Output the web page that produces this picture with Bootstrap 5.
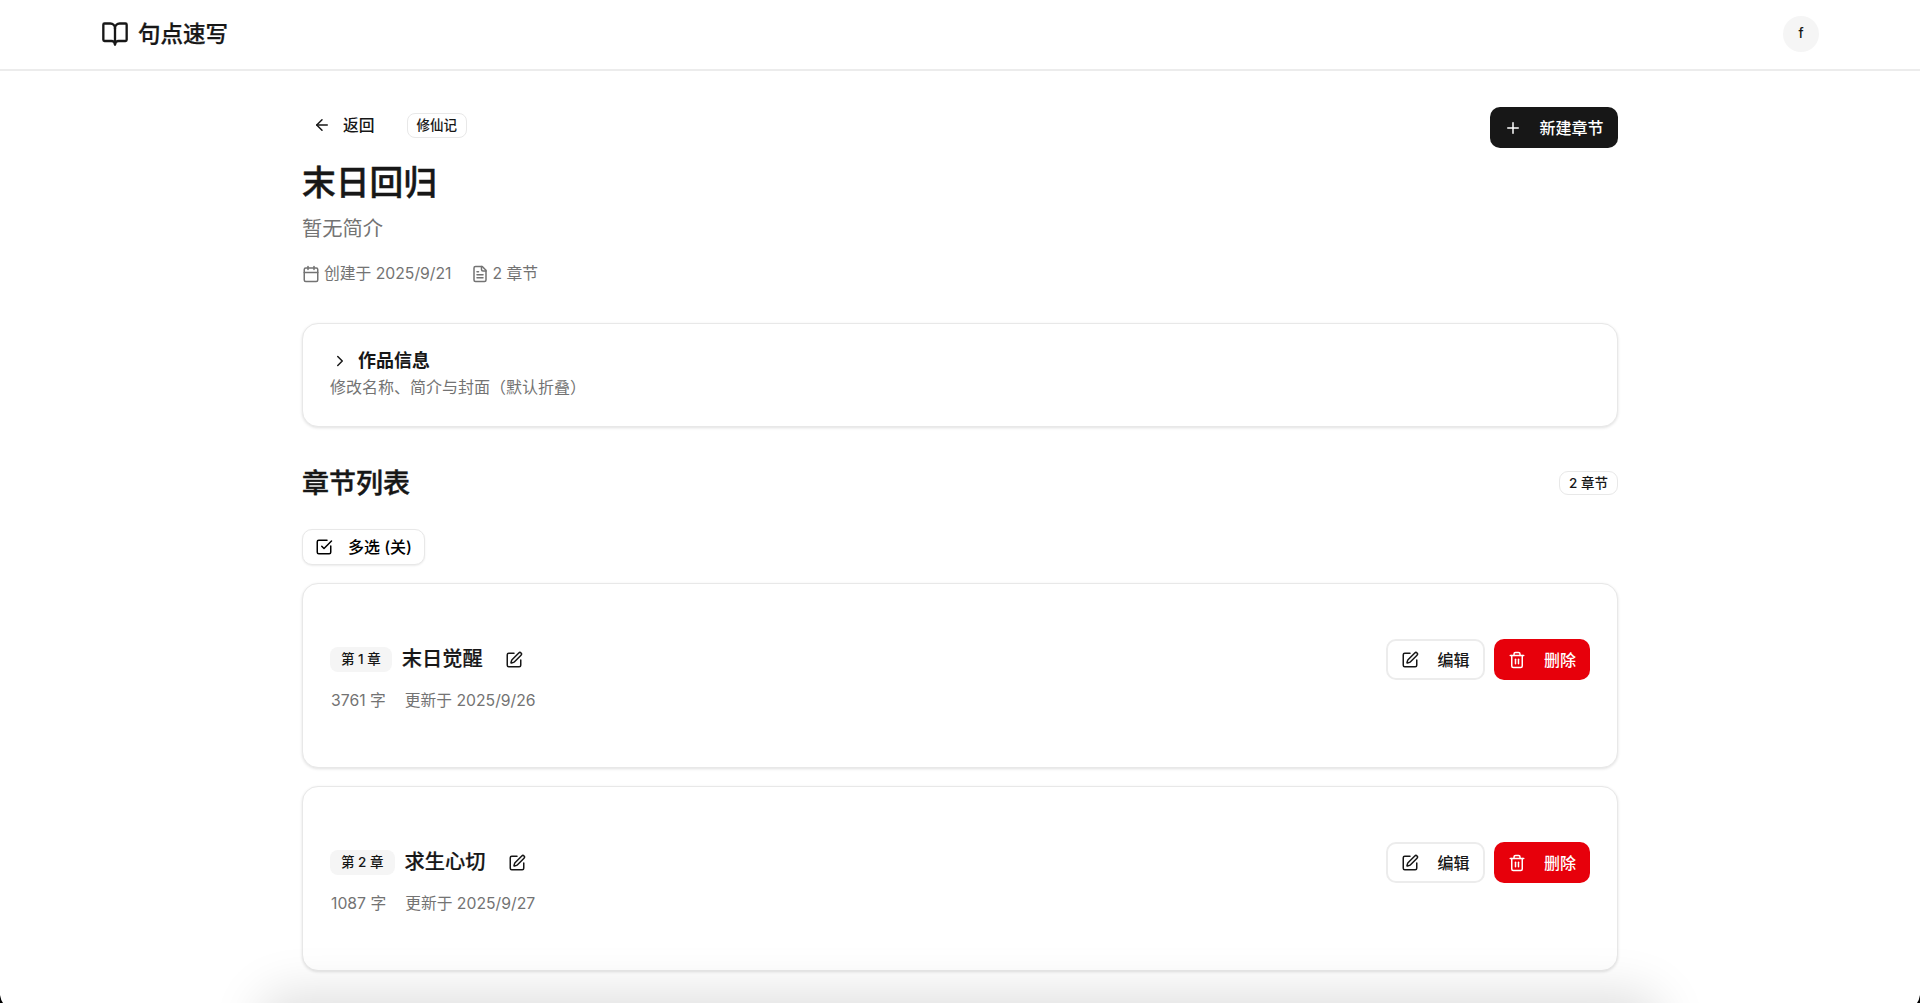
<!doctype html>
<html lang="zh"><head><meta charset="utf-8">
<link href="https://cdn.jsdelivr.net/npm/bootstrap@5.3.0/dist/css/bootstrap.min.css" rel="stylesheet">
<style>
html,body{height:100%;overflow:hidden}
body{font-family:Inter,"Noto Sans CJK SC",sans-serif;color:#171717;background:#fff}
.topbar{height:71px;border-bottom:2px solid #ececec;padding:0 101px 2px}
.brand{font-size:22.5px;font-weight:500;gap:9px;color:#171717;-webkit-text-stroke:.25px #171717}
.avatar{width:36px;height:36px;border-radius:50%;background:#f5f5f5;font-size:13.5px;font-weight:500}
.page{width:1316px;margin:0 auto;padding-top:36px}
.back{font-size:15.75px;font-weight:500;gap:12px;padding:0 12px 0 11px}
.back span{position:relative;top:1px}
.tag{border:1px solid #e8e8e8;border-radius:8px;font-size:13.5px;font-weight:500;padding:0 9px;height:25px;line-height:23px}
.head-l{gap:20px}
.new-btn{background:#171717;color:#fff;width:128px;height:41px;border-radius:10px;font-size:16px;font-weight:500;gap:17px;border:0;padding:0}
.ttl{font-size:33.75px;font-weight:500;line-height:44px;margin:13px 0 0;-webkit-text-stroke:.45px #171717}
.sub{font-size:20.25px;color:#737373;line-height:28px;margin-top:10px}
.meta{font-size:15.75px;color:#737373;gap:19px;margin-top:21px;line-height:20px}
.meta>span{gap:4px}
.pane{border:1px solid #e8e8e8;border-radius:16px;box-shadow:0 1px 3px rgba(0,0,0,.12);background:#fff}
.info{height:104px;margin-top:39px;padding:25px 27px}
.info-t{font-size:18px;font-weight:600;line-height:24px;gap:9px;padding-left:1px}
.info-s{font-size:16px;color:#737373;line-height:22px;margin-top:3px}
.sec{margin-top:42px;height:30px}
.sec h2{font-size:27px;font-weight:500;margin:0;-webkit-text-stroke:.4px #171717}
.sec .tag{height:24px;line-height:22px;border-radius:9px;margin-bottom:2px}
.multi{width:123px;height:36px;margin-top:30px;border:1px solid #e8e8e8;border-radius:10px;box-shadow:0 1px 2px rgba(0,0,0,.08);font-size:16px;font-weight:500;gap:15px;padding:0;background:#fff}
.chap{height:185px;padding:55px 27px 0;margin-top:18px}
.num{background:#f5f5f5;border-radius:8px;font-size:13.5px;font-weight:500;height:25px;padding:0 11px}
.chap-t{font-size:20.25px;font-weight:500;margin-left:10px;-webkit-text-stroke:.2px #171717}
.pen{margin-left:22px}
.chap-m{font-size:15.75px;color:#737373;gap:19px;margin-top:10px;padding-left:1px;line-height:22px}
.act{gap:9px}
.edit,.del{height:41px;width:96px;border-radius:10px;font-size:16px;font-weight:500;gap:18px;padding:0}
.edit{border:2px solid #ececec;background:#fff;color:#171717;width:99px}
.del{background:#e7000b;color:#fff;border:0}
.row-h{height:41px}
.ico{fill:none;stroke:currentColor;stroke-width:2;stroke-linecap:round;stroke-linejoin:round;flex:none}
.dock{position:fixed;left:270px;right:270px;bottom:-60px;height:60px;box-shadow:0 0 50px 10px rgba(0,0,0,.13);border-radius:16px}
.nick{position:fixed;bottom:0;width:3px;height:8px}
.nick-l{left:0}
.nick-r{right:0}
</style></head><body>
<header class="topbar d-flex align-items-center justify-content-between">
 <div class="brand d-flex align-items-center">
  <svg class="ico" width="28" height="28" viewBox="0 0 24 24"><path d="M12 7v14"/><path d="M3 18a1 1 0 0 1-1-1V4a1 1 0 0 1 1-1h5a4 4 0 0 1 4 4 4 4 0 0 1 4-4h5a1 1 0 0 1 1 1v13a1 1 0 0 1-1 1h-6a3 3 0 0 0-3 3 3 3 0 0 0-3-3z"/></svg>
  <span>句点速写</span></div>
 <div class="avatar d-flex align-items-center justify-content-center">f</div>
</header>
<main class="page">
 <div class="d-flex justify-content-between align-items-start">
  <div class="head-l d-flex align-items-center" style="height:36px">
   <div class="back d-flex align-items-center"><svg class="ico" width="18" height="18" viewBox="0 0 24 24"><path d="m12 19-7-7 7-7"/><path d="M19 12H5"/></svg><span>返回</span></div>
   <span class="tag">修仙记</span>
  </div>
  <button class="new-btn d-flex align-items-center justify-content-center"><svg class="ico" width="18" height="18" viewBox="0 0 24 24"><path d="M5 12h14"/><path d="M12 5v14"/></svg><span>新建章节</span></button>
 </div>
 <h1 class="ttl">末日回归</h1>
 <div class="sub">暂无简介</div>
 <div class="meta d-flex">
  <span class="d-flex align-items-center"><svg class="ico" width="18" height="18" viewBox="0 0 24 24"><path d="M8 2v4"/><path d="M16 2v4"/><rect width="18" height="18" x="3" y="4" rx="2"/><path d="M3 10h18"/></svg>创建于 2025/9/21</span>
  <span class="d-flex align-items-center"><svg class="ico" width="18" height="18" viewBox="0 0 24 24"><path d="M15 2H6a2 2 0 0 0-2 2v16a2 2 0 0 0 2 2h12a2 2 0 0 0 2-2V7Z"/><path d="M14 2v4a2 2 0 0 0 2 2h4"/><path d="M16 13H8"/><path d="M16 17H8"/><path d="M10 9H8"/></svg>2 章节</span>
 </div>
 <section class="pane info">
  <div class="info-t d-flex align-items-center"><svg class="ico" width="18" height="18" viewBox="0 0 24 24"><path d="m9 18 6-6-6-6"/></svg>作品信息</div>
  <div class="info-s">修改名称、简介与封面（默认折叠）</div>
 </section>
 <div class="sec d-flex justify-content-between align-items-center"><h2>章节列表</h2><span class="tag">2 章节</span></div>
 <button class="multi d-flex align-items-center justify-content-center"><svg class="ico" width="18" height="18" viewBox="0 0 24 24"><path d="M21 10.5V19a2 2 0 0 1-2 2H5a2 2 0 0 1-2-2V5a2 2 0 0 1 2-2h11"/><path d="m9 11 3 3L22 4"/></svg><span>多选 (关)</span></button>
 <article class="pane chap d-flex align-items-start justify-content-between">
  <div>
   <div class="row-h d-flex align-items-center"><span class="num d-flex align-items-center justify-content-center">第 1 章</span><span class="chap-t">末日觉醒</span><svg class="ico pen" width="18" height="18" viewBox="0 0 24 24"><path d="M12 3H5a2 2 0 0 0-2 2v14a2 2 0 0 0 2 2h14a2 2 0 0 0 2-2v-7"/><path d="M18.375 2.625a1 1 0 0 1 3 3l-9.013 9.014a2 2 0 0 1-.853.505l-2.873.84a.5.5 0 0 1-.62-.62l.84-2.873a2 2 0 0 1 .506-.852z"/></svg></div>
   <div class="chap-m d-flex"><span>3761 字</span><span>更新于 2025/9/26</span></div>
  </div>
  <div class="act d-flex align-items-center">
   <button class="edit d-flex align-items-center justify-content-center"><svg class="ico" width="18" height="18" viewBox="0 0 24 24"><path d="M12 3H5a2 2 0 0 0-2 2v14a2 2 0 0 0 2 2h14a2 2 0 0 0 2-2v-7"/><path d="M18.375 2.625a1 1 0 0 1 3 3l-9.013 9.014a2 2 0 0 1-.853.505l-2.873.84a.5.5 0 0 1-.62-.62l.84-2.873a2 2 0 0 1 .506-.852z"/></svg><span>编辑</span></button>
   <button class="del d-flex align-items-center justify-content-center"><svg class="ico" width="18" height="18" viewBox="0 0 24 24"><path d="M3 6h18"/><path d="M19 6v14a2 2 0 0 1-2 2H7a2 2 0 0 1-2-2V6"/><path d="M8 6V4a2 2 0 0 1 2-2h4a2 2 0 0 1 2 2v2"/><path d="M10 11v6"/><path d="M14 11v6"/></svg><span>删除</span></button>
  </div>
 </article>
 <article class="pane chap d-flex align-items-start justify-content-between">
  <div>
   <div class="row-h d-flex align-items-center"><span class="num d-flex align-items-center justify-content-center">第 2 章</span><span class="chap-t">求生心切</span><svg class="ico pen" width="18" height="18" viewBox="0 0 24 24"><path d="M12 3H5a2 2 0 0 0-2 2v14a2 2 0 0 0 2 2h14a2 2 0 0 0 2-2v-7"/><path d="M18.375 2.625a1 1 0 0 1 3 3l-9.013 9.014a2 2 0 0 1-.853.505l-2.873.84a.5.5 0 0 1-.62-.62l.84-2.873a2 2 0 0 1 .506-.852z"/></svg></div>
   <div class="chap-m d-flex"><span>1087 字</span><span>更新于 2025/9/27</span></div>
  </div>
  <div class="act d-flex align-items-center">
   <button class="edit d-flex align-items-center justify-content-center"><svg class="ico" width="18" height="18" viewBox="0 0 24 24"><path d="M12 3H5a2 2 0 0 0-2 2v14a2 2 0 0 0 2 2h14a2 2 0 0 0 2-2v-7"/><path d="M18.375 2.625a1 1 0 0 1 3 3l-9.013 9.014a2 2 0 0 1-.853.505l-2.873.84a.5.5 0 0 1-.62-.62l.84-2.873a2 2 0 0 1 .506-.852z"/></svg><span>编辑</span></button>
   <button class="del d-flex align-items-center justify-content-center"><svg class="ico" width="18" height="18" viewBox="0 0 24 24"><path d="M3 6h18"/><path d="M19 6v14a2 2 0 0 1-2 2H7a2 2 0 0 1-2-2V6"/><path d="M8 6V4a2 2 0 0 1 2-2h4a2 2 0 0 1 2 2v2"/><path d="M10 11v6"/><path d="M14 11v6"/></svg><span>删除</span></button>
  </div>
 </article>
</main>
<div class="dock"></div>
<svg class="nick nick-l" viewBox="0 0 3 8"><path d="M0 0V8H3Q.8 5 0 0Z" fill="#000"/></svg>
<svg class="nick nick-r" viewBox="0 0 3 8"><path d="M3 0V8H0Q2.2 5 3 0Z" fill="#000"/></svg>
<script src="https://cdn.jsdelivr.net/npm/bootstrap@5.3.0/dist/js/bootstrap.bundle.min.js"></script>
</body></html>
